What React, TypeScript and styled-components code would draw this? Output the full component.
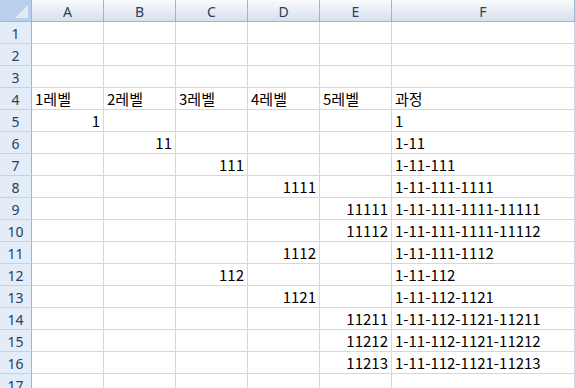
import React from "react";
import styled, { createGlobalStyle } from "styled-components";

const Global = createGlobalStyle`
  html, body { margin: 0; padding: 0; background: #ffffff; overflow: hidden; }
  body { width: 575px; height: 388px; }
`;

const Sheet = styled.div`
  display: grid;
  grid-template-columns: 32px repeat(5, 72px) 1fr;
  grid-auto-rows: 22px;
  width: 575px;
  height: 388px;
  overflow: hidden;
  font-family: "Noto Sans CJK KR", "Noto Sans", sans-serif;
  font-size: 15px;
  color: #000;
`;

const Corner = styled.div`
  box-sizing: border-box;
  position: relative;
  background: #b9cfec;
  border-right: 1px solid #9eb6ce;
  border-bottom: 1px solid #9eb6ce;
  &::after {
    content: "";
    position: absolute;
    right: 3px;
    bottom: 3px;
    width: 0;
    height: 0;
    border-left: 13px solid transparent;
    border-bottom: 13px solid #e3ebf6;
  }
`;

const ColHeader = styled.div`
  box-sizing: border-box;
  display: flex;
  align-items: center;
  justify-content: center;
  background: linear-gradient(#f9fbfd, #e4eaf3 60%, #d8e0ec);
  border-right: 1px solid #9eb6ce;
  border-bottom: 1px solid #9eb6ce;
  color: #27415f;
  font-family: "Noto Sans", sans-serif;
  font-size: 14px;
  padding-top: 1px;
`;

const RowHeader = styled.div`
  box-sizing: border-box;
  display: flex;
  align-items: center;
  justify-content: center;
  background: #e4ecf7;
  border-right: 1px solid #9eb6ce;
  border-bottom: 1px solid #c5d2e3;
  color: #27415f;
  font-family: "Noto Sans", sans-serif;
  font-size: 14px;
  padding-top: 1px;
`;

const Cell = styled.div<{ $align: "left" | "right" }>`
  box-sizing: border-box;
  display: flex;
  align-items: flex-end;
  justify-content: ${(p) => (p.$align === "right" ? "flex-end" : "flex-start")};
  border-right: 1px solid #d0d7e5;
  border-bottom: 1px solid #d0d7e5;
  padding: 0 3px 1px 3px;
  line-height: 19px;
  white-space: nowrap;
  overflow: visible;
`;

type Val = string | number | null;

const data: Val[][] = [
  [null, null, null, null, null, null],
  [null, null, null, null, null, null],
  [null, null, null, null, null, null],
  ["1레벨", "2레벨", "3레벨", "4레벨", "5레벨", "과정"],
  [1, null, null, null, null, "1"],
  [null, 11, null, null, null, "1-11"],
  [null, null, 111, null, null, "1-11-111"],
  [null, null, null, 1111, null, "1-11-111-1111"],
  [null, null, null, null, 11111, "1-11-111-1111-11111"],
  [null, null, null, null, 11112, "1-11-111-1111-11112"],
  [null, null, null, 1112, null, "1-11-111-1112"],
  [null, null, 112, null, null, "1-11-112"],
  [null, null, null, 1121, null, "1-11-112-1121"],
  [null, null, null, null, 11211, "1-11-112-1121-11211"],
  [null, null, null, null, 11212, "1-11-112-1121-11212"],
  [null, null, null, null, 11213, "1-11-112-1121-11213"],
  [null, null, null, null, null, null],
];

const cols = ["A", "B", "C", "D", "E", "F"];

export default function App() {
  return (
    <>
      <Global />
      <Sheet>
        <Corner />
        {cols.map((c) => (
          <ColHeader key={c}>{c}</ColHeader>
        ))}
        {data.map((row, r) => (
          <React.Fragment key={r}>
            <RowHeader>{r + 1}</RowHeader>
            {row.map((v, c) => (
              <Cell key={c} $align={typeof v === "number" ? "right" : "left"}>
                {v === null ? "" : String(v)}
              </Cell>
            ))}
          </React.Fragment>
        ))}
      </Sheet>
    </>
  );
}
